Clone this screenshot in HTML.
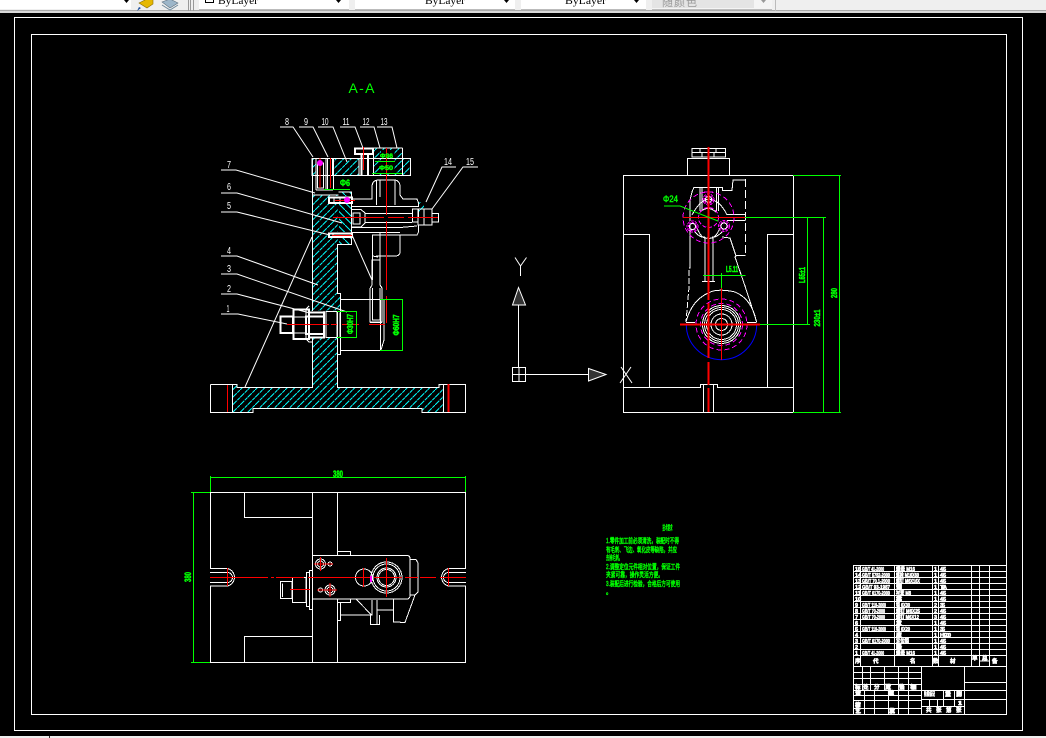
<!DOCTYPE html>
<html><head><meta charset="utf-8"><style>
html,body{margin:0;padding:0;background:#000;width:1046px;height:738px;overflow:hidden}
svg{display:block}
.l{fill:none;shape-rendering:crispEdges;stroke-width:1}
.w{stroke:#fff}.c{stroke:#0ff}.r{stroke:#f00}.g{stroke:#0f0}.m{stroke:#f0f}.b{stroke:#00f}
text{font-family:"Liberation Sans","Noto Sans CJK SC",sans-serif}
.n{fill:#fff;font-size:10px;text-anchor:middle}
.gt{fill:#0f0;stroke:#0f0;stroke-width:.5;font-size:8px;font-weight:bold;text-anchor:middle}
.tt{fill:#fff;stroke:#fff;stroke-width:.55;font-size:5.5px;font-weight:bold}
.tg{fill:#0f0;stroke:#0f0;stroke-width:.45;font-size:7px;font-family:"Liberation Sans","Noto Sans CJK SC",sans-serif}
</style></head><body>
<svg width="1046" height="738" viewBox="0 0 1046 738" xmlns="http://www.w3.org/2000/svg">
<defs>
<pattern id="h" patternUnits="userSpaceOnUse" width="7.5" height="7.5"><path d="M0 7.5L7.5 0" stroke="#0ff" stroke-width="1" fill="none" stroke-dasharray="6 .8"/></pattern>
<pattern id="h2" patternUnits="userSpaceOnUse" width="7.5" height="7.5"><path d="M0 0L7.5 7.5" stroke="#0ff" stroke-width="1" fill="none"/></pattern>
</defs>
<rect width="1046" height="738" fill="#000"/>
<!-- toolbar -->
<rect x="0" y="0" width="1046" height="10" fill="#efefef"/>
<rect x="0" y="10" width="1046" height="1" fill="#a8a8a8"/>
<rect x="0" y="11" width="1046" height="2" fill="#d8d8d8"/>
<rect x="0" y="0" width="131" height="9" fill="#fff"/>
<rect x="199" y="0" width="150" height="9" fill="#fff"/>
<rect x="355" y="0" width="160" height="9" fill="#fff"/>
<rect x="521" y="0" width="125" height="9" fill="#fff"/>
<rect x="652" y="0" width="120" height="9" fill="#f4f4f4"/>
<rect x="652" y="0" width="102" height="8" fill="#e4e4e4"/>
<path d="M188.500 0V11M190.500 0V11M193.500 0V11" stroke="#999" class="l"/>
<path d="M775.500 0V11M652 9.500H772M199 9.500H349M355 9.500H515M521 9.500H646" stroke="#bbb" class="l"/>
<path d="M124 0h5l-2.500 3zM336 0h5l-2.500 3zM504 0h5l-2.500 3zM634 0h5l-2.500 3z" fill="#000"/>
<path d="M761 0h5l-2.500 3z" fill="#999"/>
<path d="M139 3l8-4 6 0v5l-6 4z" fill="#e6b800" stroke="#8a6d00" stroke-width=".6"/>
<path d="M137 11l2-4 2 1z" fill="#1d4f9c"/>
<path d="M162 2l8-3 8 4-8 5z" fill="#9db6c9" stroke="#5f7280" stroke-width=".6"/>
<path d="M162 5l8 5 8-5" fill="none" stroke="#6f8a9c" stroke-width="1"/>
<rect x="205.500" y="-5.500" width="8" height="8" fill="#fff" stroke="#000"/>
<text x="218" y="4" font-size="10" fill="#000" textLength="40" lengthAdjust="spacingAndGlyphs" style="font-family:'Liberation Serif',serif">ByLayer</text>
<text x="425" y="4" font-size="10" fill="#000" textLength="40" lengthAdjust="spacingAndGlyphs" style="font-family:'Liberation Serif',serif">ByLayer</text>
<text x="565" y="4" font-size="10" fill="#000" textLength="41" lengthAdjust="spacingAndGlyphs" style="font-family:'Liberation Serif',serif">ByLayer</text>
<text x="662" y="6" font-size="11" fill="#999" textLength="35">随颜色</text>
<!-- bottom bar -->
<rect x="0" y="736" width="1046" height="2" fill="#efefef"/>
<rect x="49" y="736" width="1" height="2" fill="#333"/>
<!-- frames -->
<rect x="14.500" y="17.500" width="1008" height="713" class="l w"/>
<rect x="31.500" y="34.500" width="975" height="680" class="l w"/>

<!-- A-A -->
<text x="361.500" y="93" font-size="14" fill="#0f0" text-anchor="middle" textLength="26" lengthAdjust="spacing">A-A</text>

<!-- hatch fills: section view -->
<path fill="url(#h)" d="M233 412V384H237V387H439V384H443V412H422V408.500H253V412Z"/>
<path fill="url(#h)" d="M312 338H338V387H312Z"/>
<path fill="url(#h)" d="M312 195H338V293H340V311H306L309 306H312Z"/>
<path fill="url(#h)" d="M332 158H359V176H332Z"/>
<path fill="url(#h)" d="M373 148H402V176H373Z"/>
<path fill="url(#h)" d="M402 158H411V176H402Z"/>
<path fill="url(#h)" d="M312 158H316V176H312Z"/>
<path fill="url(#h2)" d="M339 192H351V244H339Z"/>
<path fill="url(#h)" d="M418 202H424V213H418Z"/>
<rect x="381" y="150" width="13" height="23" fill="#000"/>
<rect x="330" y="196" width="22" height="8" fill="#000"/>
<rect x="330" y="232" width="22" height="6" fill="#000"/>

<!-- leaders -->
<g class="l w" style="shape-rendering:auto">
<path d="M280 127H293L313 157M299 127H313L328 157M318 127H333L347 162M340 127H355L363 148M360 127H374L380 148M377 127H392L397 148"/>
<path d="M456 167H442L426 202M478 167H463L432 209"/>
<path d="M221 170H236L315 193M221 193H237L342 223M221 212H237L330 235M221 256H237L318 285M221 274H237L347 312M221 294H237L310 313M221 314H238L287 324"/>
<path d="M245 387L312 237M352 235L372 280"/>
</g>
<g class="n">
<text x="287" y="125" textLength="4" lengthAdjust="spacingAndGlyphs">8</text><text x="306" y="125" textLength="4" lengthAdjust="spacingAndGlyphs">9</text><text x="325" y="125" textLength="7" lengthAdjust="spacingAndGlyphs">10</text><text x="346" y="125" textLength="7" lengthAdjust="spacingAndGlyphs">11</text><text x="366" y="125" textLength="7" lengthAdjust="spacingAndGlyphs">12</text><text x="384" y="125" textLength="7" lengthAdjust="spacingAndGlyphs">13</text>
<text x="448" y="165" textLength="8" lengthAdjust="spacingAndGlyphs">14</text><text x="470" y="165" textLength="8" lengthAdjust="spacingAndGlyphs">15</text>
<text x="229" y="168" textLength="4" lengthAdjust="spacingAndGlyphs">7</text><text x="229" y="190" textLength="4" lengthAdjust="spacingAndGlyphs">6</text><text x="229" y="209" textLength="4" lengthAdjust="spacingAndGlyphs">5</text><text x="229" y="254" textLength="4" lengthAdjust="spacingAndGlyphs">4</text><text x="229" y="272" textLength="4" lengthAdjust="spacingAndGlyphs">3</text><text x="229" y="292" textLength="4" lengthAdjust="spacingAndGlyphs">2</text><text x="228" y="312" textLength="3" lengthAdjust="spacingAndGlyphs">1</text>
</g>

<!-- section view outlines -->
<g class="l w">
<path d="M210.500 384.500H237V387.500H312.500V338"/>
<path d="M337.500 338V387.500H439V384.500H465.500V412.500H422V408.500H253V412.500H210.500V384.500"/>
<path d="M232.500 384.500V412.500M443.500 384.500V412.500"/>
<path d="M312.500 158V311M337.500 244V293.500H340.500V354.500H337.500V387"/>
<path d="M312 158.500H410.500V175.500H312ZM332.500 158V175M359 158V175M373.500 148V175M402.500 148V175M373 148H402.500"/>
<path d="M316 158V190M326 158V190M317.500 163H323.500V188H317.500ZM327.500 158V190M333.500 158V190M316 190H333"/>
<path d="M312.500 195H338.500M338.500 192H351.500V244.500H338M351.500 199H372V187Q372 180 379 180H394Q400 180 400 187V195L403 199H417L418.500 203V207M351 206.500H418"/>
<path d="M334 197V203M340 197V203M333 233V237"/>
<path d="M351 209.500H361L365 213V223L361 227H351M353 213H360V224H353ZM365 213.500H412M365 222.500H412"/>
<path d="M412.500 209H418V222H412.500ZM418.500 209H424V225H418ZM424 209H432V225H424ZM432.500 213.500H438.500V222H432.500"/>
<path d="M351 227.500H400L417 226M351 232.500H400M418.500 225V232L417 235H372.500V240M372.500 235V256L378 257M380 235H400V252Q400 256 395 256H376"/>
<path d="M372.500 237V280M380 232V280M376.500 180V205M395 180V205M380 180V197"/>
<path d="M370 288.500L372 285V260H380V285L382 288V322H370ZM372.500 288V320H380V288M370 322.500H382"/>
<path d="M340 299.500H380M340 350.500H380M380.500 300V350M384 300L384 340L381 350"/>
<path d="M309 306L306 309V339L309 342H312M306 310V336"/>
<path d="M326 311.500H337V337.500H326ZM324 311V338M293 317H306M293 333H306M337.500 311V338"/>
<path d="M337.500 312.500V337M340 312.500V337"/>
</g>
<g fill="none" stroke="#fff" stroke-width="1.7" style="shape-rendering:crispEdges">
<path d="M355 148.500H373V154H355ZM361.500 154V175M368 154V175"/>
<path d="M329 197.500H352V203H329ZM329 233.500H352V237H329Z"/>
<path d="M293.500 309.500H309V339H293.500ZM280.500 316.500H293V333H280.500ZM309 312.500H324V337.500H309ZM306 316.500H324V334H306Z"/>
</g>
<g class="l r">
<path d="M320 158V188M330.500 158V188M363.500 147V170M386.500 148V215M386.500 221V290M386.500 296V323"/>
<path d="M333 217.500H384M388 217.500H404M408 217.500H438"/>
<path d="M287 324.500H329M331 324.500H337M342 324.500H359M369 324.500H385M332 235.500H352M335 200.500H355"/>
<path d="M227.500 385V412"/>
<path d="M448.500 384V412" style="stroke-width:2"/>
</g>
<circle cx="320" cy="163" r="3" fill="#f0f"/><circle cx="347" cy="200" r="3" fill="#f0f"/>
<g class="l g">
<path d="M337 311.500H357M337 337.500H357M356.500 311V337"/>
<path d="M380 299.500H403M380 350.500H403M402.500 299V350"/>
<path d="M375 161.500H395M372 173.500H402M324 189.500H350"/>
</g>
<g class="tg" style="font-size:6px;font-weight:bold">
<text x="380" y="158" textLength="13" lengthAdjust="spacingAndGlyphs">Φ36</text>
<text x="379" y="170" textLength="14" lengthAdjust="spacingAndGlyphs">Φ50</text>
<text x="340" y="186" textLength="10" style="font-size:9px" lengthAdjust="spacingAndGlyphs">Φ6</text>
</g>
<text class="gt" transform="translate(353,324) rotate(-90)" textLength="20" lengthAdjust="spacingAndGlyphs">Φ30H7</text>
<text class="gt" transform="translate(399,325) rotate(-90)" textLength="21" lengthAdjust="spacingAndGlyphs">Φ60H7</text>

<!-- UCS -->
<g class="l w" style="shape-rendering:auto">
<path d="M515 257.500L520.500 266L526.500 257.500M520.500 266V276"/>
<path d="M621 367L632 383M631 367L620 383"/>
</g>
<path d="M518.500 287.500L512.500 305H525.500Z" fill="#333" stroke="#fff"/>
<path d="M588.500 368.500V381L606 374.500Z" fill="#333" stroke="#fff"/>
<g class="l w">
<path d="M518.500 305V367M525.500 374.500H588"/>
<rect x="512.500" y="367.500" width="13" height="14"/>
<path d="M519 367V381M513 374.500H525"/>
</g>

<!-- right view -->
<g class="l w">
<rect x="623.500" y="175.500" width="170" height="237"/>
<path d="M623 234.500H649.500V387M767.500 387V234.500H793M623 387.500H700.500V384.500H717.500V387.500H793M703.500 384.500V412M713.500 384.500V412"/>
<path d="M687.500 175V158.500H729.500V175"/>
<path d="M692 148.500H725.500V157H692ZM692 152.500H725.500M700 148V153M716 148V153M702 152.500V157M714 152.500V157"/>
<path d="M694 187.500H722.500V190.500H732L733 180H745.500M694 187L692 192L690 200V215"/>
<path d="M745.500 179V256" stroke-dasharray="8 3"/>
<path d="M745.500 255.500H736.500L735 257L745 286L756.500 321.500"/>
<path d="M690 215V268L689 268V287L686 322M690 225V268" stroke-dasharray="6 2"/>
<path d="M700 187V211M702 187V211M716.500 187V211M718.500 187V211"/>
<path d="M692 215Q700 200 708.500 199Q720 200 727 215M700 212Q708 205 716 212"/>
<path d="M727 214.500H745.500M727 220.500H745.500"/>
<path d="M697 228Q702 240 708 238Q715 240 720 228"/>
<path d="M695 232Q700 238 705 237M722 232Q716 238 712 237M705 237V281M713 237V281"/>
<path d="M702 281.500H715M722 237L730 238L736 256"/>
<path d="M686 322Q692 298 713 291Q722 289 735 292Q752 299 756.500 322"/>
<path d="M686 322.500H695M747 322.500H756.500"/>
<circle cx="721.500" cy="324.500" r="19"/><circle cx="721.500" cy="324.500" r="17"/><circle cx="721.500" cy="324.500" r="15"/><circle cx="721.500" cy="324.500" r="10.500"/><circle cx="721.500" cy="324.500" r="6"/>
<circle cx="708.500" cy="199.500" r="3"/><circle cx="692.500" cy="226.500" r="3"/><circle cx="724" cy="226" r="3"/>
</g>
<path d="M686.300 324.500A35 35 0 0 0 756.700 324.500" class="b" fill="none" stroke-width="1" style="stroke:#00f"/>
<g class="l m">
<circle cx="708.500" cy="217.500" r="25.500" stroke-dasharray="5 3"/>
<circle cx="708.500" cy="217.500" r="10" stroke-dasharray="4 2"/>
<circle cx="708.500" cy="199.500" r="5.500" stroke-dasharray="3 1"/>
<circle cx="692.500" cy="226.500" r="5.500" stroke-dasharray="3 1"/>
<circle cx="724" cy="226" r="5.500" stroke-dasharray="3 1"/>
<circle cx="708.500" cy="199.500" r="4" stroke-dasharray="2 1"/>
<circle cx="692.500" cy="226.500" r="4" stroke-dasharray="2 1"/>
<circle cx="724" cy="226" r="4" stroke-dasharray="2 1"/>
<circle cx="721.500" cy="324.500" r="25.500" stroke-dasharray="5 3"/>
<circle cx="721.500" cy="324.500" r="21" stroke-dasharray="5 3"/>
<path d="M704 192H713M708.500 234V236"/>
</g>
<g class="l r">
<path d="M708.500 147V300M708.500 303V358M708.500 362V385M708.500 388V412" style="stroke-width:2"/>
<path d="M683 217.500H745"/>
<path d="M680 324.500H760" style="stroke-width:2"/>
<path d="M721.500 288V360"/>
</g>
<g class="l g">
<path d="M793 175.500H841M793 412.500H841M839.500 175V412M745 217.500H826M823.500 217V412M807.500 217V324M760 324.500H810"/>
<path d="M703 275.500H745.500M721.500 273V288"/>
</g>
<path d="M664 206H680L718 221" fill="none" stroke="#0f0" stroke-width="1"/>
<text class="tg" x="663" y="202" textLength="15" lengthAdjust="spacingAndGlyphs" style="font-size:9px">Φ24</text>
<text class="gt" x="732" y="272" textLength="12" lengthAdjust="spacingAndGlyphs">L5.11</text>
<text class="gt" transform="translate(805,275) rotate(-90)" textLength="16" lengthAdjust="spacingAndGlyphs">L65±1</text>
<text class="gt" transform="translate(820,318) rotate(-90)" textLength="17" lengthAdjust="spacingAndGlyphs">230±1</text>
<text class="gt" transform="translate(837,293) rotate(-90)" textLength="10" lengthAdjust="spacingAndGlyphs">280</text>

<!-- bottom view -->
<g class="l w">
<path d="M210.500 568V492.500H465.500V568M465.500 586V662.500H210.500V586"/>
<path d="M244.500 492V517.500H312.500M312.500 492V662M337.500 492V555M337.500 599V662M244.500 662V636.500H312.500"/>
<path d="M210 568.500H227.500A9 9 0 0 1 227.500 586H210M210 572.500H227.500A5 5 0 0 1 227.500 582.500H210"/>
<path d="M466 568.500H448.500A9 9 0 0 0 448.500 586H466M466 572.500H448.500A5 5 0 0 0 448.500 582.500H466"/>
<path d="M312.500 555.500H407Q410 555.500 410 559V595Q410 599 407 599H312.500"/>
<path d="M410 559.500H416L418 563V592L415 595H410"/>
<path d="M337.500 551.500H350.500V555M337.500 602.500H350.500V599M337.500 599V620.500H340.500V602M356 599L371.500 615H340.500"/>
<path d="M370.500 615V624.500H379.500V615M372 600V615M377 600V624M377.500 610H393.500V622H400.500M393.500 599V610M400 622.500H405L415 595"/>
<path d="M280.500 581.500H292V598.500H280.500ZM282.500 583.500V597M292.500 577.500H306V602.500H292.500ZM292 589.500H306M306.500 572.500H309.500V606.500H306.500ZM309.500 570.500H312.500V609.500H309.500Z"/>
<circle cx="320.500" cy="564" r="5"/><circle cx="320.500" cy="564" r="3"/><circle cx="330" cy="564" r="2"/>
<circle cx="330" cy="590" r="5"/><circle cx="330" cy="590" r="3"/><circle cx="320.500" cy="590" r="2"/>
<circle cx="364" cy="577.500" r="8.500"/>
<circle cx="386.500" cy="577.500" r="15.500"/><circle cx="386.500" cy="577.500" r="13.500"/><circle cx="386.500" cy="577.500" r="9.500"/><circle cx="386.500" cy="577.500" r="8"/>
</g>
<g class="l r">
<path d="M210 577.500H268M271 577.500H274M276 577.500H304M308 577.500H372M374 577.500H402M405 577.500H418M420 577.500H436M440 577.500H466" style="stroke-width:1"/>
<path d="M227.500 568V586M448.500 568V586M290 589.500H310M386.500 558V597M363.500 568V587" />
<path d="M320.500 557V571M314 564H330M328 564H333M330 583V597M322 590H337M317 590H324" />
</g>
<path d="M371 576V582" stroke="#f0f" stroke-width="2"/>
<g class="l g">
<path d="M210.500 477.500H466M210.500 476V492M465.500 476V492M193.500 492V662M191 492.500H210M191 662.500H210"/>
</g>
<text class="gt" x="338" y="477" textLength="10" lengthAdjust="spacingAndGlyphs" style="font-size:9px">380</text>
<text class="gt" transform="translate(191,577) rotate(-90)" textLength="10" lengthAdjust="spacingAndGlyphs" style="font-size:9px">380</text>

<!-- tech notes -->
<text class="tg" x="662.500" y="530" textLength="10" lengthAdjust="spacingAndGlyphs">技术要求</text>
<g class="tg">
<text x="606" y="543" textLength="73" lengthAdjust="spacingAndGlyphs">1.零件加工前必须清洗，装配时不得</text>
<text x="606" y="552" textLength="71" lengthAdjust="spacingAndGlyphs">有毛刺、飞边、氧化皮等缺陷，并应</text>
<text x="606" y="560" textLength="16" lengthAdjust="spacingAndGlyphs">去除毛刺。</text>
<text x="606" y="569" textLength="74" lengthAdjust="spacingAndGlyphs">2.调整定位元件相对位置，保证工件</text>
<text x="606" y="577" textLength="57" lengthAdjust="spacingAndGlyphs">夹紧可靠，操作灵活方便。</text>
<text x="606" y="586" textLength="74" lengthAdjust="spacingAndGlyphs">3.装配后进行检验，合格后方可使用</text>
<text x="606" y="594" textLength="6" lengthAdjust="spacingAndGlyphs">。</text>
</g>

<!-- title block -->
<g class="l w">
<path d="M853.500 565.500H1006M853.500 571.500H1006M853.500 577.500H1006M853.500 583.500H1006M853.500 589.500H1006M853.500 595.500H1006M853.500 601.500H1006M853.500 607.500H1006M853.500 613.500H1006M853.500 619.500H1006M853.500 625.500H1006M853.500 631.500H1006M853.500 637.500H1006M853.500 643.500H1006M853.500 649.500H1006M853.500 655.500H1006M853.500 666.500H1006"/>
<path d="M853.500 565V714M860.500 565V666M894.500 565V666M932.500 565V666M938.500 565V666M971.500 565V666M979.500 565V666M989.500 565V666M979.500 661H989.500"/>
<path d="M853.500 672.500H921.500M853.500 678.500H921.500M853.500 684.500H921.500M853.500 690.500H921.500M853.500 695.500H921.500M853.500 700.500H921.500M853.500 708.500H921.500"/>
<path d="M862.500 666V690M870.500 666V690M884.500 666V690M898.500 666V714M908.500 666V690M921.500 666V714M864.500 690V714M874.500 690V714M888.500 690V714M908.500 690V714"/>
<path d="M921.500 690.500H1006M921.500 699.500H964.500M921.500 706.500H964.500M964.500 666V714M964.500 682.500H1006M964.500 699.500H1006M943.500 690V699M954.500 690V699M929.500 699V706M937.500 699V706M943.500 699V706M954.500 699V706"/>
</g>
<g class="tt">
<text x="855" y="571">15</text><text x="862" y="571" textLength="22" lengthAdjust="spacingAndGlyphs">GB/T 41-2000</text><text x="896" y="571" textLength="19" lengthAdjust="spacingAndGlyphs">螺母 M16</text><text x="934" y="571">1</text><text x="940" y="571" textLength="6">45</text>
<text x="855" y="577">14</text><text x="862" y="577" textLength="28" lengthAdjust="spacingAndGlyphs">GB/T 5782-2000</text><text x="896" y="577" textLength="23" lengthAdjust="spacingAndGlyphs">螺栓 M16X60</text><text x="934" y="577">1</text><text x="940" y="577" textLength="6">45</text>
<text x="855" y="583">13</text><text x="862" y="583" textLength="28" lengthAdjust="spacingAndGlyphs">GB/T 70.1-2000</text><text x="896" y="583" textLength="24" lengthAdjust="spacingAndGlyphs">螺钉 M6X16X</text><text x="934" y="583">1</text><text x="940" y="583" textLength="6">45</text>
<text x="855" y="589">12</text><text x="862" y="589" textLength="28" lengthAdjust="spacingAndGlyphs">GB/T 93-1987</text><text x="896" y="589" textLength="6">垫圈</text><text x="934" y="589">1</text><text x="940" y="589" textLength="7">T10A</text>
<text x="855" y="595">11</text><text x="862" y="595" textLength="28" lengthAdjust="spacingAndGlyphs">GB/T 6170-2000</text><text x="896" y="595" textLength="15" lengthAdjust="spacingAndGlyphs">衬套 M8</text><text x="934" y="595">1</text><text x="940" y="595" textLength="6">45</text>
<text x="855" y="601">10</text><text x="896" y="601" textLength="5">钻模</text><text x="934" y="601">1</text><text x="940" y="601" textLength="6">45</text>
<text x="855" y="607">9</text><text x="862" y="607" textLength="24" lengthAdjust="spacingAndGlyphs">GB/T 119-2000</text><text x="896" y="607" textLength="14" lengthAdjust="spacingAndGlyphs">销 6X30</text><text x="934" y="607">2</text><text x="940" y="607" textLength="5">35</text>
<text x="855" y="613">8</text><text x="862" y="613" textLength="23" lengthAdjust="spacingAndGlyphs">GB/T 70-2000</text><text x="896" y="613" textLength="24" lengthAdjust="spacingAndGlyphs">螺钉 M6X25</text><text x="934" y="613">2</text><text x="940" y="613" textLength="6">45</text>
<text x="855" y="619">7</text><text x="862" y="619" textLength="23" lengthAdjust="spacingAndGlyphs">GB/T 70-2000</text><text x="896" y="619" textLength="23" lengthAdjust="spacingAndGlyphs">螺钉 M6X12</text><text x="934" y="619">3</text><text x="940" y="619" textLength="6">45</text>
<text x="855" y="625">6</text><text x="896" y="625" textLength="5">支承</text><text x="934" y="625">1</text><text x="940" y="625" textLength="6">45</text>
<text x="855" y="631">5</text><text x="862" y="631" textLength="24" lengthAdjust="spacingAndGlyphs">GB/T 119-2000</text><text x="896" y="631" textLength="14" lengthAdjust="spacingAndGlyphs">销 6X20</text><text x="934" y="631">1</text><text x="940" y="631" textLength="5">35</text>
<text x="855" y="637">4</text><text x="896" y="637" textLength="5">支座</text><text x="934" y="637">1</text><text x="940" y="637" textLength="11">HT200</text>
<text x="855" y="643">3</text><text x="862" y="643" textLength="28" lengthAdjust="spacingAndGlyphs">GB/T 6170-2000</text><text x="896" y="643" textLength="13" lengthAdjust="spacingAndGlyphs">定位销</text><text x="934" y="643">1</text><text x="940" y="643" textLength="6">45</text>
<text x="855" y="649">2</text><text x="896" y="649" textLength="5">垫圈</text><text x="934" y="649">1</text><text x="940" y="649" textLength="6">45</text>
<text x="855" y="655">1</text><text x="862" y="655" textLength="22" lengthAdjust="spacingAndGlyphs">GB/T 41-2000</text><text x="896" y="655" textLength="19" lengthAdjust="spacingAndGlyphs">螺母 M16</text><text x="934" y="655">1</text><text x="940" y="655" textLength="6">45</text>
<text x="855" y="663" textLength="3">序</text><text x="873" y="663" textLength="4">代</text><text x="910" y="663" textLength="4">名</text><text x="933" y="663" textLength="3">数</text><text x="950" y="663" textLength="4">材</text><text x="972" y="660" textLength="4">单</text><text x="982" y="660" textLength="4">总</text><text x="992" y="663" textLength="5">备</text>
<text x="855" y="689" textLength="4">标</text><text x="863" y="689" textLength="5">处</text><text x="874" y="689" textLength="5">分</text><text x="885" y="689" textLength="6">更改</text><text x="899" y="689" textLength="6">签名</text><text x="910" y="689" textLength="7">年月日</text>
<text x="855" y="695" textLength="5">设计</text><text x="888" y="695" textLength="6">标准</text>
<text x="855" y="707" textLength="5">审核</text>
<text x="855" y="713" textLength="5">工艺</text><text x="889" y="713" textLength="5">批准</text>
<text x="924" y="696" textLength="11" lengthAdjust="spacingAndGlyphs">阶段标记</text><text x="945" y="696" textLength="6">重量</text><text x="956" y="696" textLength="6">比例</text>
<text x="958" y="705" textLength="4">1:1</text>
<text x="926" y="712">共</text><text x="936" y="712">张</text><text x="946" y="712">第</text><text x="956" y="712">张</text>
</g>
</svg>
</body></html>
